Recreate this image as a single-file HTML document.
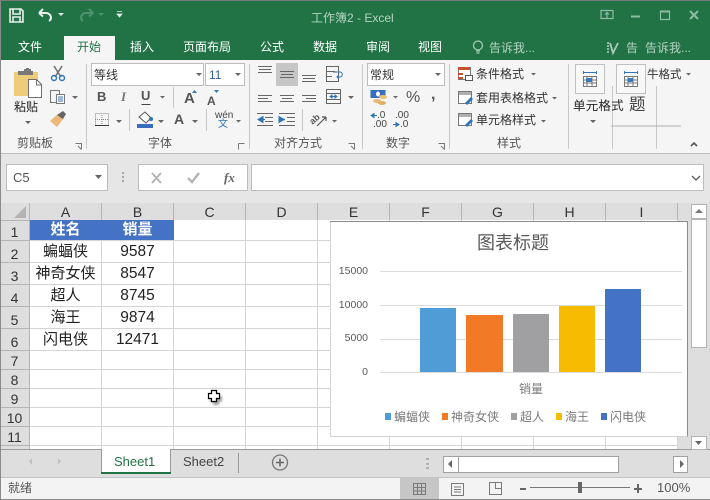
<!DOCTYPE html>
<html><head><meta charset="utf-8"><style>
*{box-sizing:border-box;margin:0;padding:0}
html,body{width:710px;height:500px;overflow:hidden;background:#dcdcdc}
body{position:relative;font-family:"Liberation Sans","Noto Sans CJK SC",sans-serif;font-size:12px;color:#333}
.a{position:absolute}
.t{position:absolute;white-space:nowrap;line-height:16px}
.w{color:#fff}
.c{position:absolute;text-align:center;white-space:nowrap;line-height:20px;color:#222;font-size:15px}
.n{font-size:15.5px}
.h{position:absolute;text-align:center;font-size:14px;line-height:18px;color:#333}
.box{position:absolute;background:#fff;border:1px solid #bdbdbd}
.y{font-size:10.5px;color:#595959;width:38px;text-align:right}
svg{position:absolute;left:0;top:0}
</style></head><body>
<div class="a" style="left:0;top:0;width:710px;height:60px;background:#217346"></div>
<div class="a" style="left:0;top:60px;width:710px;height:93px;background:#f5f5f5"></div>
<div class="a" style="left:0;top:153px;width:710px;height:50px;background:#e6e6e6;border-top:1px solid #bdbdbd"></div>
<div class="a" style="left:64px;top:36px;width:51px;height:25px;background:#f5f5f5"></div>
<div class="a" style="left:30px;top:220px;width:648px;height:229px;background:#fff"></div>
<div class="a" style="left:0;top:203px;width:710px;height:17px;background:#dedede"></div>
<div class="a" style="left:0;top:203px;width:29px;height:246px;background:#dedede"></div>
<div class="a" style="left:678px;top:203px;width:32px;height:246px;background:#dedede"></div>
<div class="a" style="left:0;top:449px;width:710px;height:28px;background:#dedede;border-top:1px solid #9a9a9a"></div>
<div class="a" style="left:0;top:477px;width:710px;height:23px;background:#f3f3f3;border-top:1px solid #c4c4c4"></div>
<div class="a" style="left:400px;top:478px;width:39px;height:21px;background:#c6c6c6"></div>

<svg width="710" height="500" viewBox="0 0 710 500" fill="none">
<!-- title bar -->
<g stroke="#e8f0ec" stroke-width="1.6">
<path d="M10 9h11l2 2v11H10z"/><path d="M13 9v5h7V9M13 22v-5h7v5"/>
<path d="M39 13l4-4M39 13l4 3.5M39 13h7a5 5 0 0 1 5 5 4 4 0 0 1-2 3" stroke-width="2"/>
</g>
<path d="M58 13h6l-3 3z" fill="#dfeae4"/>
<g stroke="#4f9270" stroke-width="2"><path d="M93 13l-4-4M93 13l-4 3.5M93 13h-7a5 5 0 0 0-5 5 4 4 0 0 0 2 3"/></g>
<path d="M98 13h6l-3 3z" fill="#4f9270"/>
<path d="M117 11.500h5M117 14h5l-2.500 3z" stroke="#dfeae4" stroke-width=".8" fill="#dfeae4"/>
<g stroke="#8fbaa3" stroke-width="1.200">
<path d="M601 10.500h12v8h-12z"/><path d="M607 18v-5M605 14.500l2-2 2 2"/>
<path d="M631 16.500h9" stroke-width="2"/><path d="M660.500 11.500h9v8h-9z"/><path d="M660 11.500h10" stroke-width="2"/>
<path d="M690 11l8 8M698 11l-8 8" stroke-width="2"/>
</g>
<g stroke="#a9cdb9" stroke-width="1.200">
<circle cx="478" cy="45.500" r="4.500"/><path d="M476 51h4M476.500 53h3"/>
<path d="M610 43l3 10 5-10" stroke-width="1.800"/><path d="M607 43h2M607 46h2M607 49h2M607 52h2" stroke="#fff" stroke-width="1"/>
</g>
<!-- clipboard -->
<path d="M14 72h24v24H14z" fill="#edcd7b"/>
<path d="M18 71h6v-2h2v-1h3v1h2v2h2v4H18z" fill="#797979"/>
<path d="M28.500 79.500h8l5 5v13h-13z" fill="#fff" stroke="#6f6f6f"/>
<path d="M36.500 80v5h5" stroke="#6f6f6f"/>
<!-- scissors -->
<g stroke="#6d6d6d" stroke-width="1.500"><path d="M54 66l7 11M62 66l-7 11"/></g>
<circle cx="54" cy="78" r="2.500" stroke="#2f75b5" stroke-width="1.400"/><circle cx="62" cy="78" r="2.500" stroke="#2f75b5" stroke-width="1.400"/>
<!-- copy -->
<path d="M50.500 90.500h9v12h-9z" fill="#f5f5f5" stroke="#777"/><path d="M56.500 94.500h8v9h-8z" fill="#fff" stroke="#777"/>
<path d="M58 97h5M58 99h5M58 101h5" stroke="#2f75b5"/>
<path d="M72 96h6l-3 3z" fill="#666"/>
<!-- painter -->
<path d="M50 121l8-7 5 5-6 8z" fill="#edb77b"/><path d="M57 115l6-4 3 3-3 5z" fill="#666"/>
<path d="M25 121h6l-3 3z" fill="#666"/>
<!-- launchers -->
<g stroke="#777"><path d="M75.500 143.500h6v6M78 146l3.500 3.500"/><path d="M348.500 143.500h6v6M351 146l3.500 3.500"/><path d="M438.500 143.500h6v6M441 146l3.500 3.500"/><path d="M238.500 143.500h6M238.500 143.500v6"/></g>
<!-- dividers -->
<g stroke="#c8c8c8"><path d="M86.500 64v85M249.500 64v85M362.500 64v85M449.500 64v85M568.500 64v85M612.500 86v63M656.500 86v63"/>
<path d="M173.500 87v21M129.500 109v22M206.500 109v22M302.500 109v22"/>
<path d="M611 126h70" stroke="#b0b0b0"/></g>
<!-- font row 2 -->
<path d="M160 96h5l-2.500 2.500z" fill="#666"/>
<path d="M192 93l2.500-3 2.500 3z" fill="#2f75b5"/>
<path d="M214 90h5l-2.500 3z" fill="#2f75b5"/>
<path d="M141.500 104.500h9" stroke="#444"/>
<!-- border icon -->
<g stroke="#888" stroke-dasharray="1 1"><path d="M95.500 113.500h13v12h-13zM102 113v13M95 119.500h14"/></g>
<path d="M95 125.500h14" stroke="#333"/>
<path d="M116 120h6l-3 3zM158 120h6l-3 3zM192 120h6l-3 3zM236 120h5l-2.500 2.500z" fill="#666"/>
<path d="M139 117l6-5 6 6-5 5z" fill="#fff" stroke="#555"/><circle cx="151" cy="119" r="2" fill="#2f75b5"/>
<path d="M137 124h16v4h-16z" fill="#3a6dbf"/>
<!-- alignment -->
<path d="M276 63h22v23h-22z" fill="#c6c6c6"/>
<g stroke="#666">
<path d="M258 66.500h14M259 69.500h12M258 72.500h14"/>
<path d="M280 71.500h14M281 74.500h12M280 77.500h14"/>
<path d="M302 75.500h14M303 78.500h12M302 81.500h14"/>
<path d="M258 95.500h14M258 98.500h10M258 101.500h14"/><path d="M280 95.500h14M282 98.500h10M280 101.500h14"/><path d="M302 95.500h14M306 98.500h10M302 101.500h14"/>
<path d="M257 113.500h16M265 117.500h8M265 121.500h8M257 125.500h16"/><path d="M279 113.500h16M287 117.500h8M287 121.500h8M279 125.500h16"/>
<path d="M326.500 66.500h12v15h-12zM327 71.500h8M327 76.500h5"/>
<path d="M326.500 89.500h14v14h-14zM327 93.500h13M327 99.500h13"/>
</g>
<path d="M330 96.500h7M330 96.500l2-1.500v3zM337 96.500l-2-1.500v3z" stroke="#2f75b5"/>
<path d="M333 72h7c3 0 3 5 0 5h-3M339 75l-2 2 2 2" stroke="#2f75b5"/>
<path d="M348 96h6l-3 3zM332 120h5l-2.500 2.500zM393 96h5l-2.500 2.500z" fill="#666"/>
<path d="M258 119.500l5-3v6zM263 119.500h2M279 116.500l5 3-5 3zM284 119.500" stroke="#2f75b5" fill="#2f75b5"/>
<path d="M258 119.500h6M279 119.500h6" stroke="#2f75b5" stroke-width="1.500"/>
<!-- orientation -->
<text x="310" y="122" transform="rotate(-42 315 120)" font-family="Liberation Sans" font-size="9" font-weight="bold" fill="#555">ab</text>
<path d="M317 126l9-9M326 117h-4M326 117v4" stroke="#555" stroke-width="1.200"/>
<!-- number format -->
<path d="M371 90.500h14v7h-14z" fill="#3a6dbf" stroke="#2f75b5"/><ellipse cx="378" cy="94" rx="2" ry="2.500" fill="#fff"/>
<ellipse cx="377" cy="101" rx="4" ry="2" fill="#edb77b"/><ellipse cx="383" cy="97" rx="4" ry="2" fill="#edc070"/><ellipse cx="382" cy="103" rx="4" ry="2" fill="#e4b05f"/>
<path d="M371 115.500h6M371 115.500l3-2v4zM393 124.500h6M399 124.500l-3-2v4z" stroke="#2f75b5" fill="#2f75b5"/>
<!-- styles icons -->
<g stroke="#777" fill="#fff"><path d="M458.500 67.500h12v12h-12z"/><path d="M458.500 91.500h13v12h-13z"/><path d="M458.500 113.500h13v12h-13z"/></g>
<path d="M458 67h12v3h-12zM458 73h5v2h-5z" fill="#c8502a"/><path d="M458 77h5v2h-5z" fill="#c8502a"/><path d="M465.500 75.500h7v5h-7z" fill="#fff" stroke="#555"/>
<path d="M459 92h12v3h-12z" fill="#b0b0b0"/><path d="M459 114h12v3h-12z" fill="#b0b0b0"/>
<path d="M465 103l6-6 2 2-6 6z" fill="#2f75b5"/><path d="M465 125l6-6 2 2-6 6z" fill="#2f75b5"/>
<path d="M531 73h5l-2.500 2.500zM552 97h5l-2.500 2.500zM541 120h5l-2.500 2.500zM686 73h5l-2.500 2.500zM590 120h6l-3 3z" fill="#666"/>
<!-- cell icons -->
<path d="M575.500 64.500h29v29h-29zM616.500 64.500h29v29h-29z" fill="#f8f8f8" stroke="#c0c0c0"/>
<g stroke="#777" fill="#fff"><path d="M583.500 76.500h13v10h-13zM624.500 76.500h13v10h-13z"/><path d="M587 76v11M592 76v11M583 80h13M583 83h13M628 76v11M633 76v11M624 80h13M624 83h13"/></g>
<path d="M586 78h6v4h-6zM628 78h5v4h-5z" fill="#3a7abf"/>
<path d="M584 72.500h12M625 72.500h12M583.500 71v3M596.500 71v3M624.500 71v3M637.500 71v3" stroke="#2f75b5"/>
<path d="M691 146l3-3 3 3" stroke="#555" stroke-width="1.600"/>
<!-- formula bar -->
<g fill="#a5a5a5"><rect x="122" y="172" width="2" height="2"/><rect x="122" y="176" width="2" height="2"/><rect x="122" y="180" width="2" height="2"/></g>
<!-- grid -->
<g stroke="#d4d4d4">
<path d="M30 240.500h648M30 262.500h648M30 284.500h648M30 306.500h648M30 328.500h648M30 350.500h648M30 369.500h648M30 388.500h648M30 407.500h648M30 426.500h648M30 445.500h648"/>
<path d="M101.500 220v229M173.500 220v229M245.500 220v229M317.500 220v229M389.500 220v229M461.500 220v229M533.500 220v229M605.500 220v229M677.500 220v229"/>
</g>
<g stroke="#b4b4b4">
<path d="M0 220.500h29M29.500 203v246M101.500 203v17M173.500 203v17M245.500 203v17M317.500 203v17M389.500 203v17M461.500 203v17M533.500 203v17M605.500 203v17M677.500 203v17"/>
<path d="M0 240.500h29M0 262.500h29M0 284.500h29M0 306.500h29M0 328.500h29M0 350.500h29M0 369.500h29M0 388.500h29M0 407.500h29M0 426.500h29M0 445.500h29"/>
</g>
<path d="M26 206v12H14z" fill="#b4b4b4"/>
<path d="M30 220h144v20H30z" fill="#4472c4"/>
<path d="M101.500 220v20" stroke="#4472c4"/>
<!-- chart -->
<path d="M330 221h358v216H330z" fill="#fff"/>
<path d="M330.500 221.500v215h357" stroke="#d4d4d4"/><path d="M330 221.500h357.500v215" stroke="#8a8a8a"/>
<path d="M380 271.500h302M380 305.500h302M380 339.500h302M380 372.500h302" stroke="#dcdcdc"/>
<rect x="420" y="308" width="36" height="64" fill="#4f9cd6"/>
<rect x="466" y="315" width="37" height="57" fill="#f27a26"/>
<rect x="513" y="314" width="36" height="58" fill="#a0a0a3"/>
<rect x="559" y="306" width="36" height="66" fill="#f7bc00"/>
<rect x="605" y="289" width="36" height="83" fill="#4472c4"/>
<rect x="385" y="413" width="6" height="7" fill="#4f9cd6"/><rect x="442" y="413" width="6" height="7" fill="#f27a26"/><rect x="511" y="413" width="6" height="7" fill="#a0a0a3"/><rect x="556" y="413" width="6" height="7" fill="#f7bc00"/><rect x="601" y="413" width="6" height="7" fill="#4472c4"/>
<!-- v scroll -->
<path d="M691.500 204.500h15v14h-15zM691.500 219.500h15v128h-15zM691.500 436.500h15v13h-15z" fill="#fff" stroke="#b4b4b4"/>
<path d="M695 213l4-4 4 4z" fill="#777"/><path d="M695 441h7l-3.500 4z" fill="#666"/>
<!-- sheet tabs -->
<path d="M101.500 449.500v23h69v-23" fill="#fff" stroke="#9a9a9a"/><path d="M102 449h68v2h-68z" fill="#fff"/>
<path d="M101 472h70v2h-70z" fill="#217346"/>
<path d="M238.500 453v20" stroke="#9a9a9a"/>
<path d="M32 458v7l-3-3.500zM58 458v7l3-3.500z" fill="#c2c2c2"/>
<circle cx="280" cy="462.500" r="7.500" stroke="#777" stroke-width="1.300"/><path d="M276 462.500h8M280 458.500v8" stroke="#666" stroke-width="1.500"/>
<g fill="#b0b0b0"><rect x="426" y="458" width="3" height="2"/><rect x="426" y="463" width="3" height="2"/><rect x="426" y="467" width="3" height="2"/></g>
<!-- h scroll -->
<path d="M443.500 456.500h15v16h-15zM458.500 456.500h160v16h-160zM673.500 456.500h14v16h-14z" fill="#fff" stroke="#a0a0a0"/>
<path d="M452 460v8l-4-4zM680 460v8l4-4z" fill="#666"/>
<!-- status bar -->
<g stroke="#7a7a7a"><path d="M413.500 483.500h12v11h-12zM417.500 483v11M421.500 483v11M413 487.500h12M413 491h12"/>
<path d="M451.500 483.500h12v12h-12zM454 487h7M454 489.500h7M454 492h7"/>
<path d="M489.500 482.500h12v12h-12zM495.500 482.500v6h6"/></g>
<path d="M530 487.500h100" stroke="#777"/>
<path d="M520 488h6v2h-6zM634 488h8v2h-8zM637 484h2v9h-2z" fill="#666"/>
<rect x="578" y="482" width="4" height="11" fill="#666"/>
<!-- outer frame -->
<path d="M.5 0v500" stroke="#8a8a8a"/><path d="M0 .5h710" stroke="#7a7a7a"/><path d="M0 499.500h710" stroke="#8a8a8a"/>
<!-- cursor -->
<path d="M212 393h6v3h3v6h-3v3h-6v-3h-3v-6h3z" fill="#666" opacity=".6" style="filter:blur(1px)" transform="translate(1 0)"/>
<path d="M211.500 390.500h5v3h3v5h-3v3h-5v-3h-3v-5h3z" fill="#fff" stroke="#000" stroke-width="1.200"/>
</svg>

<div class="t" style="left:311px;top:10px;color:#b4d2c2;font-size:12px">工作簿2 - Excel</div>
<div class="t w" style="left:18px;top:39px">文件</div>
<div class="t" style="left:77px;top:39px;color:#217346">开始</div>
<div class="t w" style="left:130px;top:39px">插入</div>
<div class="t w" style="left:183px;top:39px">页面布局</div>
<div class="t w" style="left:260px;top:39px">公式</div>
<div class="t w" style="left:313px;top:39px">数据</div>
<div class="t w" style="left:366px;top:39px">审阅</div>
<div class="t w" style="left:418px;top:39px">视图</div>
<div class="t" style="left:489px;top:40px;color:#b4d2c2">告诉我...</div>
<div class="t" style="left:626px;top:40px;color:#b4d2c2">告</div>
<div class="t" style="left:645px;top:40px;color:#b4d2c2">告诉我...</div>

<div class="box" style="left:91px;top:63px;width:113px;height:23px"></div>
<div class="box" style="left:205px;top:63px;width:40px;height:23px"></div>
<div class="box" style="left:367px;top:63px;width:78px;height:23px"></div>
<svg width="710" height="100"><path d="M196 73h6l-3 3zM235 73h6l-3 3zM435 73h6l-3 3z" fill="#666"/></svg>
<div class="t" style="left:94px;top:67px">等线</div>
<div class="t" style="left:209px;top:67px;color:#2f5d94">11</div>
<div class="t" style="left:370px;top:67px">常规</div>
<div class="t" style="left:14px;top:99px;color:#222">粘贴</div>
<div class="t" style="left:97px;top:89px;font-size:13px;font-weight:bold;color:#555">B</div>
<div class="t" style="left:121px;top:89px;font-size:13px;font-style:italic;font-family:'Liberation Serif',serif;font-weight:bold;color:#777">I</div>
<div class="t" style="left:141px;top:88px;font-size:13px;font-weight:bold;color:#555">U</div>
<div class="t" style="left:184px;top:91px;font-size:15px;font-weight:bold;color:#555">A</div>
<div class="t" style="left:207px;top:93px;font-size:12px;font-weight:bold;color:#555">A</div>
<div class="t" style="left:174px;top:111px;font-size:14px;font-weight:bold;color:#555">A</div>
<div class="t" style="left:215px;top:111px;font-size:10px;line-height:10px;color:#444">wén</div>
<div class="t" style="left:218px;top:119px;font-size:10px;line-height:11px;color:#2f75b5">文</div>
<div class="t" style="left:406px;top:90px;font-size:16px;color:#555">%</div>
<div class="t" style="left:431px;top:87px;font-size:16px;font-weight:bold;color:#555">,</div>
<div class="t" style="left:377px;top:111px;font-size:10px;line-height:10px;color:#444">.0</div>
<div class="t" style="left:373px;top:120px;font-size:10px;line-height:10px;color:#444">.00</div>
<div class="t" style="left:395px;top:111px;font-size:10px;line-height:10px;color:#444">.00</div>
<div class="t" style="left:400px;top:120px;font-size:10px;line-height:10px;color:#444">.0</div>
<div class="t" style="left:476px;top:66px">条件格式</div>
<div class="t" style="left:476px;top:90px">套用表格格式</div>
<div class="t" style="left:476px;top:112px">单元格样式</div>
<div class="t" style="left:647px;top:67px;font-size:11.500px">牛格式</div>
<div class="t" style="left:573px;top:98px;color:#222;font-size:12.500px;letter-spacing:.2px">单元格式</div>
<div class="t" style="left:629px;top:95px;font-size:16.500px;line-height:20px;color:#444">题</div>
<div class="t" style="left:17px;top:135px;color:#555">剪贴板</div>
<div class="t" style="left:148px;top:135px;color:#555">字体</div>
<div class="t" style="left:274px;top:135px;color:#555">对齐方式</div>
<div class="t" style="left:386px;top:135px;color:#555">数字</div>
<div class="t" style="left:497px;top:135px;color:#555">样式</div>

<div class="box" style="left:6px;top:164px;width:102px;height:27px"></div>
<div class="box" style="left:138px;top:164px;width:110px;height:27px"></div>
<div class="box" style="left:251px;top:164px;width:453px;height:27px"></div>
<svg width="710" height="200"><path d="M95 175h7l-3.500 4z" fill="#666"/>
<path d="M152 173l9 10M161 173l-9 10" stroke="#b5b5b5" stroke-width="2"/><path d="M188 178l4 4 7-9" stroke="#b5b5b5" stroke-width="2.500" fill="none"/><path d="M692 176l4 4 4-4" stroke="#555" stroke-width="1.300" fill="none"/></svg>
<div class="t" style="left:13px;top:170px;font-size:13px;color:#555">C5</div>
<div class="t" style="left:224px;top:170px;font-family:'Liberation Serif',serif;font-style:italic;font-weight:bold;font-size:13px;color:#666">fx</div>

<div class="h" style="left:30px;top:203px;width:71px">A</div><div class="h" style="left:102px;top:203px;width:71px">B</div><div class="h" style="left:174px;top:203px;width:71px">C</div><div class="h" style="left:246px;top:203px;width:71px">D</div><div class="h" style="left:318px;top:203px;width:71px">E</div><div class="h" style="left:390px;top:203px;width:71px">F</div><div class="h" style="left:462px;top:203px;width:71px">G</div><div class="h" style="left:534px;top:203px;width:71px">H</div><div class="h" style="left:606px;top:203px;width:71px">I</div>
<div class="h" style="left:0;top:223px;width:29px">1</div><div class="h" style="left:0;top:245px;width:29px">2</div><div class="h" style="left:0;top:267px;width:29px">3</div><div class="h" style="left:0;top:289px;width:29px">4</div><div class="h" style="left:0;top:311px;width:29px">5</div><div class="h" style="left:0;top:333px;width:29px">6</div><div class="h" style="left:0;top:352px;width:29px">7</div><div class="h" style="left:0;top:371px;width:29px">8</div><div class="h" style="left:0;top:390px;width:29px">9</div><div class="h" style="left:0;top:409px;width:29px">10</div><div class="h" style="left:0;top:428px;width:29px">11</div>

<div class="c" style="left:30px;top:220px;width:71px;color:#fff;font-weight:bold">姓名</div><div class="c" style="left:102px;top:220px;width:71px;color:#fff;font-weight:bold">销量</div>
<div class="c" style="left:30px;top:242px;width:71px">蝙蝠侠</div><div class="c n" style="left:102px;top:242px;width:71px">9587</div>
<div class="c" style="left:30px;top:264px;width:71px">神奇女侠</div><div class="c n" style="left:102px;top:264px;width:71px">8547</div>
<div class="c" style="left:30px;top:286px;width:71px">超人</div><div class="c n" style="left:102px;top:286px;width:71px">8745</div>
<div class="c" style="left:30px;top:308px;width:71px">海王</div><div class="c n" style="left:102px;top:308px;width:71px">9874</div>
<div class="c" style="left:30px;top:330px;width:71px">闪电侠</div><div class="c n" style="left:102px;top:330px;width:71px">12471</div>

<div class="t" style="left:477px;top:231px;font-size:18px;line-height:24px;color:#595959">图表标题</div>
<div class="t y" style="left:330px;top:263px">15000</div>
<div class="t y" style="left:330px;top:297px">10000</div>
<div class="t y" style="left:330px;top:330px">5000</div>
<div class="t y" style="left:330px;top:364px">0</div>
<div class="t" style="left:519px;top:381px;color:#7a7a7a">销量</div>
<div class="t" style="left:394px;top:409px;color:#7a7a7a">蝙蝠侠</div>
<div class="t" style="left:451px;top:409px;color:#7a7a7a">神奇女侠</div>
<div class="t" style="left:520px;top:409px;color:#7a7a7a">超人</div>
<div class="t" style="left:565px;top:409px;color:#7a7a7a">海王</div>
<div class="t" style="left:610px;top:409px;color:#7a7a7a">闪电侠</div>

<div class="t" style="left:114px;top:454px;font-size:13px;color:#217346">Sheet1</div>
<div class="t" style="left:183px;top:454px;font-size:13px;color:#444">Sheet2</div>
<div class="t" style="left:8px;top:480px;color:#555">就绪</div>
<div class="t" style="left:657px;top:480px;font-size:13px;color:#555">100%</div>
</body></html>
